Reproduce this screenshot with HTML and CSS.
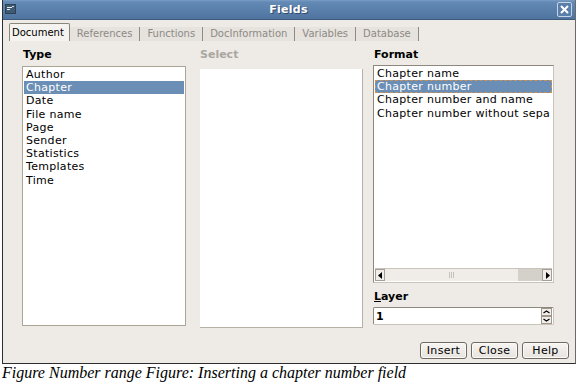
FILE: index.html
```html
<!DOCTYPE html>
<html>
<head>
<meta charset="utf-8">
<title>Fields</title>
<link rel="stylesheet" href="styles.css">
</head>
<body>
<div class="dialog">
  <div class="titlebar">
    <svg class="app-icon" width="11" height="10" viewBox="0 0 11 10">
      <rect x="0" y="0" width="11" height="10" fill="#2f4152"/>
      <rect x="1" y="1" width="9" height="8" fill="#3f5a73"/>
      <rect x="2" y="3" width="5" height="1" fill="#e8eef4"/>
      <rect x="2" y="5" width="3" height="1" fill="#e8eef4"/>
      <rect x="7" y="2" width="2" height="1" fill="#c9d6e3"/>
    </svg>
    <div class="title">Fields</div>
    <div class="close-btn">
      <svg width="9" height="9" viewBox="0 0 9 9"><path d="M1 1 L8 8 M8 1 L1 8" stroke="#fff" stroke-width="2"/></svg>
    </div>
  </div>
  <div class="tabbar">
    <div class="tab active">Document</div>
    <div class="tab">References</div>
    <div class="tab">Functions</div>
    <div class="tab">DocInformation</div>
    <div class="tab">Variables</div>
    <div class="tab">Database</div>
  </div>
  <div class="content">
    <div class="col col-type">
      <div class="label">Type</div>
      <ul class="list type-list">
        <li>Author</li>
        <li class="sel">Chapter</li>
        <li>Date</li>
        <li>File name</li>
        <li>Page</li>
        <li>Sender</li>
        <li>Statistics</li>
        <li>Templates</li>
        <li>Time</li>
      </ul>
    </div>
    <div class="col col-select">
      <div class="label dim">Select</div>
      <div class="select-list"></div>
    </div>
    <div class="col col-format">
      <div class="label">Format</div>
      <div class="format-box">
        <ul class="format-items">
          <li>Chapter name</li>
          <li class="sel focus">Chapter number</li>
          <li>Chapter number and name</li>
          <li>Chapter number without sepa</li>
        </ul>
        <div class="hscroll">
          <div class="sb-arrow"><svg width="5" height="7" viewBox="0 0 5 7"><path d="M4 0 L0 3.5 L4 7 Z" fill="#000"/></svg></div>
          <div class="sb-thumb"><span class="grip"></span></div>
          <div class="sb-track"></div>
          <div class="sb-arrow"><svg width="5" height="7" viewBox="0 0 5 7"><path d="M1 0 L5 3.5 L1 7 Z" fill="#000"/></svg></div>
        </div>
      </div>
      <div class="label layer-label"><u>L</u>ayer</div>
      <div class="spin">
        <span class="spin-value">1</span>
        <div class="spin-btns">
          <div class="spin-btn"><svg width="7" height="4" viewBox="0 0 7 4"><path d="M0.5 3 L3.5 1 L6.5 3" stroke="#000" stroke-width="1.2" fill="none"/></svg></div>
          <div class="spin-btn"><svg width="7" height="4" viewBox="0 0 7 4"><path d="M0.5 1 L3.5 3 L6.5 1" stroke="#000" stroke-width="1.2" fill="none"/></svg></div>
        </div>
      </div>
    </div>
  </div>
  <div class="buttons">
    <button class="btn">Insert</button>
    <button class="btn">Close</button>
    <button class="btn">Help</button>
  </div>
</div>
<p class="caption">Figure Number range Figure: Inserting a chapter number field</p>
</body>
</html>
```

FILE: styles.css
```css
html, body {
  margin: 0;
  padding: 0;
  background: #ffffff;
}

body {
  width: 577px;
  height: 388px;
  overflow: hidden;
  font-family: "DejaVu Sans", Verdana, sans-serif;
  font-size: 11px;
  color: #000;
}

.dialog {
  margin-left: 2px;
  width: 572px;
  height: 363px;
  background: #eeebe7;
  border-left: 1px solid #2e2e2e;
  border-right: 1px solid #6a6a6a;
  border-bottom: 1px solid #2e2e2e;
  display: flex;
  flex-direction: column;
}

/* title bar */
.titlebar {
  height: 20px;
  flex: none;
  display: flex;
  align-items: center;
  padding: 0 3px 0 2px;
  background: linear-gradient(#7b9ec6 0, #6389b5 2px, #4f749f 100%);
  border-bottom: 1px solid #3d5a7c;
  box-sizing: border-box;
}

.app-icon {
  flex: none;
  margin-top: -1px;
}

.title {
  flex: 1;
  text-align: center;
  color: #ffffff;
  font-weight: bold;
  font-size: 11px;
  letter-spacing: 0.3px;
  text-shadow: 1px 1px 0 #2f4a6a;
  padding-left: 4px;
}

.close-btn {
  flex: none;
  width: 13px;
  height: 13px;
  border: 1px solid #c6d4e6;
  border-radius: 2px;
  background: #5a7fab;
  display: flex;
  align-items: center;
  justify-content: center;
}

/* tabs */
.tabbar {
  flex: none;
  display: flex;
  align-items: flex-end;
  height: 18px;
  margin-top: 3px;
  padding-left: 6px;
  font-size: 10px;
}

.tab {
  height: 14px;
  line-height: 14px;
  padding: 0 7px;
  color: #8d8a85;
  background: #e6e2dd;
  border-right: 1px solid #8f8a82;
  box-sizing: border-box;
  white-space: nowrap;
}

.tab.active {
  height: 18px;
  line-height: 18px;
  padding: 0 5px 0 2px;
  color: #000;
  background: #f5f3f0;
  border: 1px solid #8a857d;
  border-bottom: none;
  border-radius: 2px 2px 0 0;
}

/* content */
.content {
  flex: none;
  display: flex;
  padding: 7px 0 0 19px;
}

.col {
  display: flex;
  flex-direction: column;
}

.label {
  font-weight: bold;
  height: 14px;
  line-height: 14px;
  padding-left: 1px;
  margin-bottom: 4px;
}

.label.dim {
  color: #aaa6a0;
}

.list, .format-items {
  list-style: none;
  margin: 0;
  padding: 0;
  letter-spacing: 0.3px;
}

.list li, .format-items li {
  height: 13.2px;
  line-height: 13px;
  padding-left: 2px;
  white-space: nowrap;
  overflow: hidden;
}

li.sel {
  background: #6a8eb5;
  color: #ffffff;
}

li.focus {
  outline: 1px dashed #c8925a;
  outline-offset: -1px;
}

.col-type {
  width: 164px;
}

.type-list {
  height: 260px;
  background: #ffffff;
  border: 1px solid #aba596;
  padding: 1px;
  box-sizing: border-box;
}

.col-select {
  width: 164px;
  margin-left: 13px;
}

.select-list {
  height: 259px;
  margin-top: 3px;
  margin-left: 1px;
  background: #ffffff;
  border-right: 1px solid #b7b0a6;
  border-bottom: 1px solid #b7b0a6;
  box-sizing: border-box;
}

.col-format {
  width: 181px;
  margin-left: 10px;
}

.format-box {
  margin-top: -1px;
  height: 218px;
  background: #ffffff;
  border: 1px solid #8d877e;
  border-right-color: #c9c3ba;
  border-bottom-color: #c9c3ba;
  box-sizing: border-box;
  padding: 1px;
  display: flex;
  flex-direction: column;
}

.format-items {
  flex: 1;
  overflow: hidden;
}

.hscroll {
  flex: none;
  height: 12px;
  display: flex;
  border-top: 1px solid #c9c3ba;
  background: #ebe8e4;
}

.sb-arrow {
  width: 10px;
  flex: none;
  display: flex;
  align-items: center;
  justify-content: center;
  background: #f1eeea;
  border: 1px solid #a49e95;
  box-sizing: border-box;
}

.sb-thumb {
  flex: 1;
  background: #f0ede9;
  display: flex;
  align-items: center;
  justify-content: center;
}

.grip {
  width: 5px;
  height: 6px;
  background: repeating-linear-gradient(90deg, #c6c1b9 0, #c6c1b9 1px, transparent 1px, transparent 2px);
}

.sb-track {
  width: 24px;
  flex: none;
  background: #d4d0ca;
}

.layer-label {
  margin-top: 7px;
  margin-bottom: 3px;
}

.layer-label u {
  text-decoration: underline;
  text-underline-offset: 1px;
}

.spin {
  height: 18px;
  display: flex;
  align-items: center;
  background: #ffffff;
  border: 1px solid #8d877e;
  border-right-color: #c9c3ba;
  border-bottom-color: #c9c3ba;
  border-radius: 2px;
  box-sizing: border-box;
}

.spin-value {
  flex: 1;
  padding-left: 2px;
  font-weight: bold;
}

.spin-btns {
  flex: none;
  width: 11px;
  height: 16px;
  display: flex;
  flex-direction: column;
  margin-right: 1px;
}

.spin-btn {
  flex: 1;
  display: flex;
  align-items: center;
  justify-content: center;
  background: #f2efeb;
  border: 1px solid #9d978e;
  box-sizing: border-box;
}

/* buttons */
.buttons {
  flex: none;
  display: flex;
  justify-content: flex-end;
  gap: 4px;
  margin-top: 14px;
  padding-right: 6px;
}

.btn {
  font-family: "DejaVu Sans", Verdana, sans-serif;
  font-size: 11px;
  letter-spacing: 0.3px;
  color: #000;
  width: 47px;
  height: 17px;
  padding: 0;
  background: linear-gradient(#f7f5f2, #e7e3de);
  border: 1px solid #6e6961;
  border-radius: 3px;
  box-shadow: inset 0 0 0 1px #fbfaf8;
}

/* caption */
.caption {
  margin: 0 0 0 2px;
  font-family: "Liberation Serif", "Times New Roman", serif;
  font-style: italic;
  font-size: 16px;
  line-height: 17px;
  color: #000;
}
```
